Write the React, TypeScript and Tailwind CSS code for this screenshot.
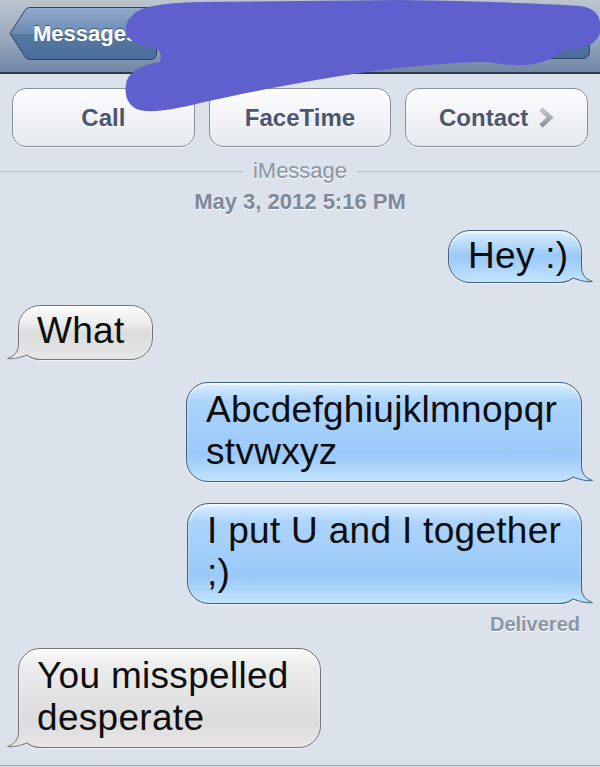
import React from "react";

const blueBg =
  "bg-[linear-gradient(to_bottom,#dbeefe_0px,#acd4fb_18px,#9ac9f9_calc(100%-26px),#c2e3fe_100%)]";
const grayBg =
  "bg-[linear-gradient(to_bottom,#fbfbfb_0px,#ececec_18px,#dcdcdc_calc(100%-26px),#e7e7e7_100%)]";

function Tail({ side }: { side: "left" | "right" }) {
  const me = side === "right";
  const id = me ? "tail-blue" : "tail-gray";
  return (
    <svg
      width="36"
      height="28"
      viewBox="0 0 36 28"
      className={
        "absolute bottom-[-1px] " + (me ? "right-[-13px]" : "left-[-13px] -scale-x-100")
      }
    >
      <defs>
        <linearGradient id={id} x1="0" y1="0" x2="0" y2="1">
          <stop offset="0.05" stopColor={me ? "#9ac9f9" : "#dcdcdc"} />
          <stop offset="1" stopColor={me ? "#c2e3fe" : "#e7e7e7"} />
        </linearGradient>
      </defs>
      <path
        d="M0 0 L23.5 0 L23.5 12 C23.5 19 27 24 34.5 26.5 C29 27.5 22 25.5 15 23 C11 26 6 27.5 0 27.5 Z"
        fill={`url(#${id})`}
      />
      <path
        d="M23.5 0 L23.5 12 C23.5 19 27 24 34.5 26.5 C29 27.5 22 25.5 15 23 C11 26 6 27.5 0 27.5"
        fill="none"
        stroke={me ? "#44607f" : "#767676"}
        strokeWidth="1"
      />
    </svg>
  );
}

function Bubble({
  me,
  className,
  children,
}: {
  me?: boolean;
  className: string;
  children: React.ReactNode;
}) {
  return (
    <div
      className={
        "relative rounded-[22px] border text-[37px] leading-[42px] tracking-[0.3px] text-[#0d0d0d] " +
        (me
          ? "self-end border-[#44607f] pl-[19px] shadow-[inset_0_2px_2px_rgba(255,255,255,0.7),0_1px_1px_rgba(255,255,255,0.6)] " +
            blueBg
          : "self-start border-[#767676] pl-[18px] shadow-[inset_0_2px_2px_rgba(255,255,255,0.9),0_1px_1px_rgba(255,255,255,0.6)] " +
            grayBg) +
        " " +
        className
      }
    >
      <Tail side={me ? "right" : "left"} />
      <span className="relative block whitespace-nowrap">{children}</span>
    </div>
  );
}

function NavButtons() {
  return (
    <div className="flex h-[74px] items-start border-b-2 border-[#2c3a4c] bg-[linear-gradient(to_bottom,#bcc5d0,#98a8bc_55%,#7087a5)] pl-[9px] pr-[10px] pt-[7px]">
      <div className="relative flex h-[53px] w-[148px] items-center pl-[24px]">
        <svg width="148" height="53" viewBox="0 0 148 53" className="absolute inset-0">
          <defs>
            <linearGradient id="back" x1="0" y1="0" x2="0" y2="1">
              <stop offset="0" stopColor="#93abcb" />
              <stop offset="0.5" stopColor="#6a8bb6" />
              <stop offset="0.52" stopColor="#56799f" />
              <stop offset="1" stopColor="#4a6c9b" />
            </linearGradient>
          </defs>
          <path
            d="M1 26.5 L16.5 2.5 Q18 0.5 21 0.5 L141 0.5 Q147.5 0.5 147.5 7 L147.5 46 Q147.5 52.5 141 52.5 L21 52.5 Q18 52.5 16.5 50.5 Z"
            fill="url(#back)"
            stroke="#2d4565"
          />
        </svg>
        <span className="relative text-[22px] font-bold text-white [text-shadow:0_-1px_0_rgba(0,0,0,0.45)]">
          Messages
        </span>
      </div>
      <div className="ml-auto h-[52px] w-[110px] rounded-[7px] border border-[#2d4565] bg-[linear-gradient(to_bottom,#93abcb,#6a8bb6_50%,#56799f_52%,#4a6c9b)]" />
    </div>
  );
}

function ActionButton({ children }: { children: React.ReactNode }) {
  return (
    <div className="flex h-[59px] flex-1 items-center justify-center gap-[10px] rounded-[14px] border border-[#8a929e] bg-[linear-gradient(to_bottom,#fdfdfe,#f1f3f6_50%,#e6eaf0)] text-[24px] font-bold text-[#4b5672] shadow-[0_1px_0_rgba(255,255,255,0.7)] [text-shadow:0_1px_0_#fff]">
      {children}
    </div>
  );
}

function Scribble() {
  return (
    <svg
      width="600"
      height="120"
      viewBox="0 0 600 120"
      className="pointer-events-none absolute left-0 top-0 blur-[0.6px]"
    >
      <path
        d="M132 16 C138 7 160 3 200 2 L400 0 C470 1 540 3 580 6 C598 8 602 20 600 32 C598 44 585 48 565 50 C555 56 545 64 525 65 C505 66 495 62 480 62 C440 63 390 68 340 76 C290 84 240 94 200 103 C180 108 160 112 145 111 C128 110 124 95 126 85 C127 75 135 66 160 62 C162 55 160 50 155 48 C138 47 126 40 126 29 C126 23 128 19 132 16 Z"
        fill="#5f60cd"
      />
    </svg>
  );
}

export default function App() {
  return (
    <div className="relative flex h-[767px] w-[600px] flex-col overflow-hidden bg-[#dbe2ec] font-['Liberation_Sans',Arial,sans-serif]">
      <NavButtons />

      <div className="mt-[14px] flex gap-[14px] px-[12px]">
        <ActionButton>Call</ActionButton>
        <ActionButton>FaceTime</ActionButton>
        <ActionButton>
          <span>Contact</span>
          <svg width="16" height="23" viewBox="0 0 16 23">
            <defs>
              <linearGradient id="chev" x1="0" y1="0" x2="0" y2="1">
                <stop offset="0" stopColor="#c3c7cd" />
                <stop offset="1" stopColor="#8c929b" />
              </linearGradient>
            </defs>
            <path d="M3 3 L12 11.5 L3 20" fill="none" stroke="url(#chev)" strokeWidth="5" />
          </svg>
        </ActionButton>
      </div>

      <div className="mt-[12px] flex items-center gap-[10px]">
        <div className="flex-1 border-t border-dotted border-[#98a1af]" />
        <span className="text-[22px] leading-[24px] text-[#8a93a2] [text-shadow:0_1px_0_#fff]">
          iMessage
        </span>
        <div className="flex-1 border-t border-dotted border-[#98a1af]" />
      </div>
      <div className="mt-[6px] text-center text-[22px] font-bold leading-[26px] text-[#7e8899] [text-shadow:0_1px_0_#fff]">
        May 3, 2012 5:16 PM
      </div>

      <div className="flex flex-col px-[18px]">
        <Bubble me className="mt-[15px] w-[134px] pb-[5px] pt-[4px]">
          Hey :)
        </Bubble>
        <Bubble className="mt-[22px] w-[135px] pb-[7px] pt-[4px]">What</Bubble>
        <Bubble me className="mt-[22px] w-[396px] pb-[8px] pt-[6px]">
          Abcdefghiujklmnopqr
          <br />
          stvwxyz
        </Bubble>
        <Bubble me className="mt-[21px] w-[395px] pb-[9px] pt-[6px]">
          I put U and I together
          <br />
          ;)
        </Bubble>
        <div className="mt-[8px] self-end pr-[2px] text-[20px] font-bold leading-[24px] text-[#8b94a5] [text-shadow:0_1px_0_#fff]">
          Delivered
        </div>
        <Bubble className="mt-[12px] w-[303px] pb-[8px] pt-[6px]">
          You misspelled
          <br />
          desperate
        </Bubble>
      </div>

      <div className="mt-auto mb-[1px] h-[1px] bg-[#9ea6b2]" />

      <Scribble />
    </div>
  );
}
